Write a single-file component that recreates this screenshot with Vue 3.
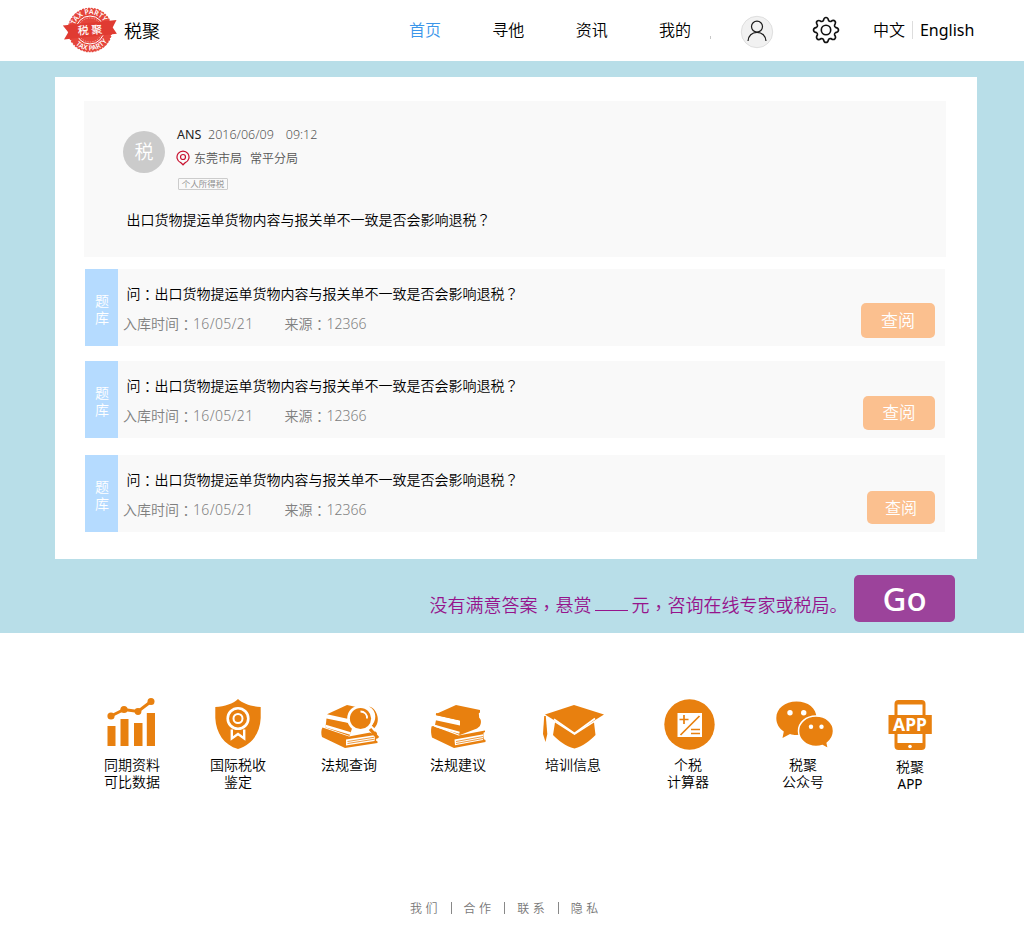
<script setup>
const nav = ['首页', '寻他', '资讯', '我的']
const rows = [
  { id: 1, size: 'large' },
  { id: 2, size: 'medium' },
  { id: 3, size: 'small' }
]
const question = '出口货物提运单货物内容与报关单不一致是否会影响退税'
const footer = ['我们', '合作', '联系', '隐私']
</script>

<template>
  <div class="page">
    <header class="header">
      <svg class="logo" width="56" height="48" viewBox="0 0 56 48">
        <defs>
          <path id="arc-top" d="M12.2 24a15.8 15.8 0 0 1 31.6 0" />
          <path id="arc-bottom" d="M7.6 24a20.4 20.4 0 0 0 40.8 0" />
        </defs>
        <circle cx="28" cy="24" r="21.6" fill="#e5453b" stroke="#e5453b" stroke-width="1.4" stroke-dasharray="2 1" />
        <circle cx="28" cy="24" r="14" fill="none" stroke="#fff" stroke-width="1" />
        <circle cx="28" cy="24" r="12" fill="none" stroke="#f6b9b4" stroke-width=".7" stroke-dasharray="1.5 1" />
        <g transform="rotate(-6 28 24)">
          <text class="seal-text"><textPath href="#arc-top" startOffset="50%" text-anchor="middle">TAX PARTY</textPath></text>
          <text class="seal-text"><textPath href="#arc-bottom" startOffset="50%" text-anchor="middle">TAX PARTY</textPath></text>
        </g>
        <path d="M.8 19.5 54.5 14l-3.8 7.4 4.2 6.3L2 33.5l4.3-7.2z" fill="#e03b32" />
        <text class="seal-name" x="28" y="28" text-anchor="middle" transform="rotate(-4 28 24)">税 聚</text>
      </svg>
      <span class="brand">税聚</span>
      <nav class="nav">
        <a v-for="(n, i) in nav" :key="n" :class="{ active: i === 0 }">{{ n }}</a>
      </nav>
      <span class="tick"></span>
      <svg class="user" width="34" height="34" viewBox="0 0 34 34" fill="none">
        <circle cx="17" cy="17" r="15.7" fill="#f1f1f1" stroke="#dfdfdf" />
        <circle cx="17" cy="11.6" r="5.5" stroke="#1c1c1c" stroke-width="1.2" />
        <path d="M8 26c.2-5.2 4-8.7 9-8.7s8.800 3.500 9 8.700" stroke="#1c1c1c" stroke-width="1.2" />
      </svg>
      <svg class="gear" width="28" height="28" viewBox="0 0 28 28" fill="none" stroke="#111" stroke-width="1.6" stroke-linejoin="round">
        <circle cx="14" cy="14" r="4.700" />
        <path d="M11.400 4.500Q12 1.500 14 1.500T16.600 4.500Q17.300 5.700 18.800 5.500Q21.500 3.600 22.900 5.100T22.500 9.200Q22.300 10.700 23.500 11.400Q26.500 12 26.500 14T23.500 16.600Q22.300 17.300 22.500 18.800Q24.400 21.500 22.900 22.900T18.800 22.500Q17.300 22.300 16.600 23.500Q16 26.500 14 26.500T11.400 23.500Q10.700 22.300 9.200 22.500Q6.500 24.400 5.100 22.900T5.500 18.800Q5.700 17.300 4.500 16.600Q1.500 16 1.500 14T4.500 11.400Q5.700 10.700 5.500 9.200Q3.600 6.500 5.100 5.100T9.200 5.500Q10.700 5.700 11.400 4.500Z" />
      </svg>
      <span class="lang zh">中文</span>
      <span class="lang en">English</span>
    </header>

    <main class="main">
      <section class="card">
        <article class="post">
          <div class="author">
            <div class="avatar">税</div>
            <div class="meta">
              <div class="line who"><b>ANS</b><span>2016/06/09</span><span class="time">09:12</span></div>
              <div class="line place">
                <svg width="14" height="16" viewBox="0 0 14 16" fill="none" stroke="#c8102e">
                  <path d="M7 14.800 4.700 12.600A6 6 0 1 1 9.300 12.600Z" stroke-width="1.200" />
                  <circle cx="7" cy="7" r="2.500" stroke-width="1.200" />
                </svg>
                <span>东莞市局</span><span class="branch">常平分局</span>
              </div>
              <div class="tag">个人所得税</div>
            </div>
          </div>
          <p class="question">{{ question }}<i class="mark">？</i></p>
        </article>

        <article v-for="r in rows" :key="r.id" class="row" :class="r.size">
          <div class="side"><span>题</span><span>库</span></div>
          <div class="body">
            <p class="ask">问<i class="mark colon">：</i>{{ question }}<i class="mark">？</i></p>
            <p class="info"><span class="stored">入库时间<i class="mark colon">：</i><span class="date">16/05/21</span></span><span>来源<i class="mark colon">：</i>12366</span></p>
          </div>
          <button class="read">查阅</button>
        </article>
      </section>

      <div class="reward">
        <span>没有满意答案<i class="comma">，</i>悬赏</span><span class="blank"></span><span>元<i class="comma">，</i>咨询在线专家或税局。</span>
        <button class="go">Go</button>
      </div>
    </main>

    <section class="features">
      <div class="feature f1">
        <svg width="54" height="54" viewBox="0 0 54 54" fill="#e8800f">
          <path d="M2.500 30h8v20h-8zM15.500 23h8v27h-8zM29 27h8.500v23H29zM41.800 17H50v33h-8.200z" />
          <path d="m6 20 13-6.500 14 2L46 5.500" fill="none" stroke="#e8800f" stroke-width="3" />
          <circle cx="6" cy="20" r="3.600" /><circle cx="19" cy="13.500" r="3.600" /><circle cx="33" cy="15.500" r="3.400" /><circle cx="46" cy="5.500" r="3.500" />
        </svg>
        <p>同期资料<br>可比数据</p>
      </div>
      <div class="feature f2">
        <svg width="54" height="54" viewBox="0 0 54 54">
          <path d="M27 3c5 4.600 13 7.600 22.700 8v11C49 37 41 49 27 53 13 49 5 37 4.300 22V11C14 10.600 22 7.600 27 3z" fill="#e8800f" />
          <g fill="none" stroke="#fff"><circle cx="27" cy="22.500" r="10.300" stroke-width="2.600" /><circle cx="27" cy="22.500" r="4.500" stroke-width="2" />
            <path d="M20.800 33.500v9l6.200-4.500 6.200 4.500v-9" stroke-width="2.400" /></g>
        </svg>
        <p>国际税收<br>鉴定</p>
      </div>
      <div class="feature f3">
        <svg width="64" height="54" viewBox="-3 -2 64 54">
          <path d="m7 16.300 20-9.300 14 3-8 12z" fill="#e8800f" />
          <path d="m6.500 20.500 27 5.500-4 12-24-8.500z" fill="#e8800f" />
          <path d="m7.500 18.500 24 5.500M5.500 28l25 7.500" stroke="#fff" stroke-width="2.600" />
          <path d="M2.500 29.500 29 38.500l26.500-5 1.500 1.500-1 7.500 1.500 1V45L25 50 2 39c-1-3-1-7 .5-9.500z" fill="#e8800f" />
          <path d="m26 41.500 29.500-4.500-1 6L26 47.500z" fill="#fff" />
          <path d="m27.500 43.500 27-4.300M27.500 45.500l27-4.300" stroke="#e8800f" stroke-width=".8" />
          <path d="M49 8.500c8 4 8.500 15 1 20.500l4 1.500c3-3 4.500-7 3.500-12-1-5-4-9-8.500-10z" fill="#e8800f" />
          <circle cx="40.500" cy="20.500" r="13.300" fill="#fff" /><circle cx="40.500" cy="20.500" r="10.600" fill="#e8800f" />
          <path d="M40.500 13.500c4 0 7 3 6.500 7" fill="none" stroke="#fff" stroke-width="1.800" />
          <path d="m48.500 28.500 5 5" stroke="#fff" stroke-width="6" /><path d="m50 31 8 9" stroke="#e8800f" stroke-width="3.300" />
        </svg>
        <p>法规查询</p>
      </div>
      <div class="feature f4">
        <svg width="58" height="54" viewBox="0 -1 58 54">
          <path d="M7 17 27 8l24 5v2.500l-1.200.8.4 4.500c2 1.500 2.500 5 .5 8.500l-2.700 2.200L31 38 6 28l1-5z" fill="#e8800f" />
          <path d="m5 17.800 26 5.700v5L5.500 23z" fill="#fff" />
          <path d="m7 17 24.500 5.500" stroke="#e8800f" stroke-width="1.800" />
          <path d="M2.500 29.500 4 29l25.500 9.500L56 33.500v1.500l-1.500.8.3 6.500 1.700.7V45L25 51 3 40.500c-1-3.500-1.300-7-.5-11z" fill="#e8800f" />
          <path d="m5.500 28.800 25 7" stroke="#fff" stroke-width="2" />
          <path d="m25.500 42.500 29-5.300-.5 5.800-28 5.300z" fill="#fff" />
          <path d="m27 44.500 27-5M27 46.500l27-5" stroke="#e8800f" stroke-width=".8" />
        </svg>
        <p>法规建议</p>
      </div>
      <div class="feature f5">
        <svg width="64" height="54" viewBox="-1 -1 64 54" fill="#e8800f">
          <path d="M3 17.500 32 8l30 9.500L32.500 36z" /><path d="M13 25.500 32.500 38 52 25.500l1.500 12.500c-6 6-12 11-21 13.500C23 49 17 44 11 38z" />
          <path d="M12 22.300 32.500 36.500 53 21.500" fill="none" stroke="#fff" stroke-width="1.800" />
          <path d="M2.200 19h1.600l1.500 18L3.500 45 1 37z" />
        </svg>
        <p>培训信息</p>
      </div>
      <div class="feature f6">
        <svg width="54" height="54" viewBox="-1 -1 54 54" fill="none">
          <circle cx="27.500" cy="27.500" r="25.200" fill="#e8800f" /><path d="M15.500 16h24.500v24H15.500z" fill="#fff" />
          <path d="M17.500 22.500h9m-4.500-4.500v9M18.500 38l19-19m-8.500 13.500h9m-9 4h9" stroke="#e8800f" stroke-width="1.700" />
        </svg>
        <p>个税<br>计算器</p>
      </div>
      <div class="feature f7">
        <svg width="60" height="54" viewBox="-1 -1 60 54" fill="#e8800f">
          <path d="M22.500 4.500C11 4.500 2.300 11.500 2.300 21c0 6 3 10.500 7.500 13.500L8.500 41l7.500-4c2 .7 4 1 6.500 1 11 0 20-7 20-17S34 4.500 22.500 4.500z" />
          <path d="M42 19c-10 0-17.500 6.700-17.500 15S32 49.500 42 49.500c2 0 4.500-.3 6.500-1l6 3.500-1.300-6C57 43 59.500 39 59.500 34 59.500 25.700 52 19 42 19z" stroke="#fff" stroke-width="1.500" />
          <g fill="#fff"><circle cx="16" cy="15.800" r="2.700" /><circle cx="29.700" cy="15.800" r="2.700" /><circle cx="37" cy="29.800" r="2.200" /><circle cx="47.500" cy="29.800" r="2.200" /></g>
        </svg>
        <p>税聚<br>公众号</p>
      </div>
      <div class="feature f8">
        <svg width="54" height="54" viewBox="0 -1 54 54">
          <rect x="11.500" y="3" width="31" height="50" rx="4" fill="#e8800f" /><path d="M14.500 7.500h25V18h-25zm0 29h25V46h-25z" fill="#fff" />
          <path d="M5.500 18h43.300v19H5.500z" fill="#e8800f" /><circle cx="27" cy="49.500" r="1.800" fill="#fff" />
          <text x="27" y="34" text-anchor="middle" class="app-label">APP</text>
        </svg>
        <p>税聚<br><span class="latin">APP</span></p>
      </div>
    </section>

    <footer class="footer">
      <template v-for="(f, i) in footer" :key="f"><span v-if="i" class="bar"></span><span class="link">{{ f }}</span></template>
    </footer>
  </div>
</template>

<style>
body { background: #fff; }
</style>

<style scoped>
* { box-sizing: border-box; }
.page { width: 1024px; height: 929px; overflow: hidden; background: #fff; color: #000; font-family: "Noto Sans", "Noto Sans CJK SC", sans-serif; font-weight: 350; }
p { margin: 0; white-space: nowrap; }
i { font-style: normal; }
span { white-space: nowrap; }
button { border: 0; padding: 0; color: #fff; font-family: inherit; font-weight: 350; }
.mark, .comma { font-family: "Noto Sans CJK TC", sans-serif; line-height: 1; }
.colon { vertical-align: -1px; }
.comma { vertical-align: -3px; }
.latin { font-weight: 400; font-size: 13.500px; }

.header { height: 61px; display: flex; align-items: center; padding-left: 62px; font-size: 16px; }
.logo { margin-top: -1px; flex: none; }
.seal-text { fill: #fff; font-size: 7px; font-weight: 600; }
.seal-name { fill: #fff; font-family: "Noto Sans CJK SC", sans-serif; font-size: 11px; font-weight: 500; }
.brand { font-size: 18px; line-height: 26px; margin-left: 6px; width: 36px; }
.nav { display: flex; gap: 51.3px; margin: -2px 0 0 249px; line-height: 24px; }
.active { color: #3c96ea; }
.tick { width: 1px; height: 3px; background: #c8c8c8; margin: 13px 0 0 19px; }
.user { margin: 2px 0 0 29px; flex: none; }
.gear { margin: -2px 0 0 38px; flex: none; }
.zh { margin: -2px 0 0 33px; line-height: 24px; }
.en { margin: -1px 0 0 7px; padding-left: 7px; border-left: 1px solid #ddd; line-height: 18px; font-weight: 400; }

.main { height: 572px; background: #b8dee8; padding: 16px 47px 0 55px; }
.card { height: 482px; background: #fff; padding: 24px 31px 0 29px; }
.post { height: 156px; background: #f9f9f9; padding: 30px 0 0 39px; margin-bottom: 12px; }
.author { display: flex; height: 76px; }
.avatar { width: 42px; height: 42px; border-radius: 50%; background: #cbcbcb; color: #fff; font-size: 19px; line-height: 42px; text-align: center; }
.meta { padding-left: 12px; margin-top: -8px; }
.line { display: flex; align-items: center; height: 23px; font-size: 12px; color: #555; }
.who { font-size: 12.500px; }
.who b { font-weight: 400; color: #222; width: 31px; }
.time { margin-left: 12px; }
.place svg { margin: 1px 4px 0 -1px; }
.branch { margin-left: 8px; }
.tag { width: 50px; height: 12px; margin: 9px 0 0 1px; border: 1px solid #ccc; border-radius: 1px; font-size: 8.500px; line-height: 10px; text-align: center; color: #888; white-space: nowrap; }
.question { font-size: 14px; line-height: 26px; padding-left: 3.500px; }

.row { display: flex; width: 860px; height: 77px; margin-left: 1px; margin-bottom: 15px; background: #f9f9f9; }
.row.medium { margin-bottom: 17px; }
.side { width: 33px; background: #b5dbff; color: #fff; font-size: 14px; line-height: 17px; padding: 23px 0 0 1px; display: flex; flex-direction: column; align-items: center; }
.body { flex: 1; padding: 10px 0 0 5px; font-size: 14px; }
.ask { padding-left: 3.500px; height: 30px; line-height: 30px; }
.info { height: 30px; line-height: 30px; color: #808080; }
.stored { display: inline-block; width: 161.500px; }
.date { letter-spacing: .350px; }
.read { background: #fbc08f; border-radius: 5px; margin-right: 10px; }
.large .read { width: 74px; height: 35px; margin-top: 34px; padding-bottom: 2px; font-size: 17px; }
.medium .read { width: 72px; height: 34px; margin-top: 35px; padding-bottom: 2px; font-size: 16.500px; }
.small .read { width: 68px; height: 33px; margin-top: 36px; padding-bottom: 1px; font-size: 16px; }

.reward { display: flex; height: 74px; padding: 16px 0 0 374.500px; color: #96148c; font-size: 18px; line-height: 60px; }
.blank { width: 33px; height: 1px; background: #96148c; margin: 35px 4px 0 3px; }
.go { width: 101px; height: 47px; margin-left: 6.500px; border-radius: 5px; background: #9c439b; font-size: 33px; line-height: 47px; font-weight: 500; flex: none; }

.features { display: flex; height: 227px; padding: 63px 0 0 86px; font-size: 14px; line-height: 17px; color: #000; }
.feature { width: 92px; display: flex; flex-direction: column; align-items: center; text-align: center; flex: none; }
.feature svg { flex: none; margin-bottom: 6px; }
.f2 { margin-left: 14px; }
.f3 { margin-left: 19px; }
.f4 { margin-left: 17px; }
.f5 { margin-left: 23px; }
.f6 { margin-left: 23px; }
.f7 { margin-left: 23px; }
.f8 { margin-left: 15px; }
.f8 p { padding-top: 2px; }
.app-label { fill: #fff; font-family: "Noto Sans", sans-serif; font-size: 17.500px; font-weight: 700; }

.footer { display: flex; align-items: center; height: 20px; margin-top: 38px; padding-left: 410px; color: #777; font-size: 12px; }
.link { width: 30px; letter-spacing: 3.500px; }
.bar { width: 1px; height: 12px; background: #888; margin: 0 12px 0 10.600px; }
</style>
